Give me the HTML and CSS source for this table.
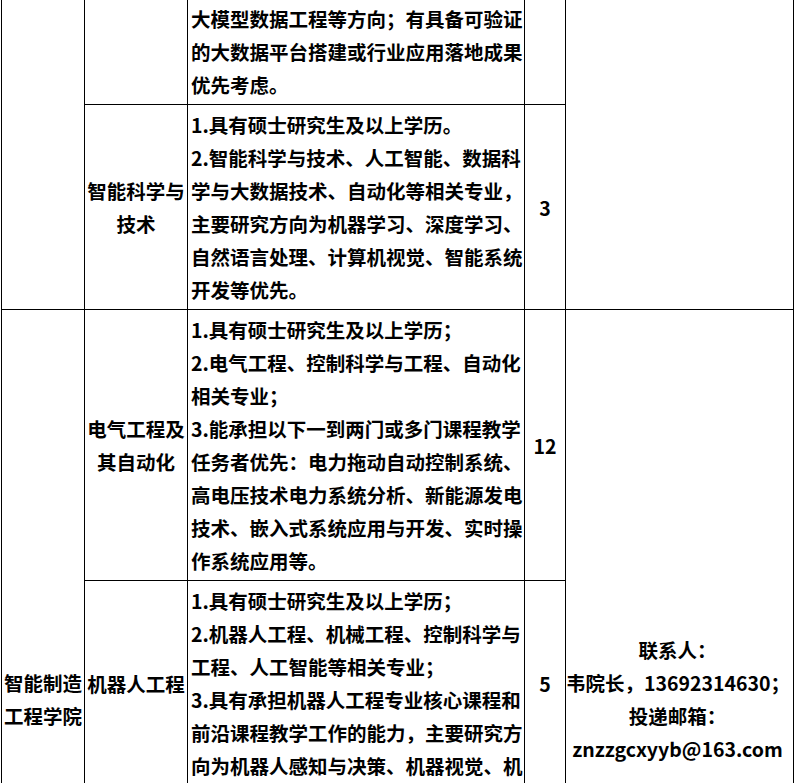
FILE: index.html
```html
<!DOCTYPE html>
<html lang="zh-CN">
<head>
<meta charset="utf-8">
<title>招聘岗位表</title>
<link rel="stylesheet" href="styles.css">
</head>
<body>
<table class="grid">
  <colgroup>
    <col class="c-college">
    <col class="c-major">
    <col class="c-req">
    <col class="c-num">
    <col class="c-contact">
  </colgroup>
  <tbody>
    <tr>
      <td rowspan="2" class="blank"></td>
      <td class="major"></td>
      <td class="req">大模型数据工程等方向；有具备可验证<br>的大数据平台搭建或行业应用落地成果<br>优先考虑。</td>
      <td class="num"></td>
      <td rowspan="2" class="blank"></td>
    </tr>
    <tr>
      <td class="major">智能科学与<br>技术</td>
      <td class="req">1.具有硕士研究生及以上学历。<br>2.智能科学与技术、人工智能、数据科<br>学与大数据技术、自动化等相关专业，<br>主要研究方向为机器学习、深度学习、<br>自然语言处理、计算机视觉、智能系统<br>开发等优先。</td>
      <td class="num">3</td>
    </tr>
    <tr>
      <td rowspan="2" class="college split-cell">智能制造<br>工程学院</td>
      <td class="major">电气工程及<br>其自动化</td>
      <td class="req">1.具有硕士研究生及以上学历；<br>2.电气工程、控制科学与工程、自动化<br>相关专业；<br>3.能承担以下一到两门或多门课程教学<br>任务者优先：电力拖动自动控制系统、<br>高电压技术电力系统分析、新能源发电<br>技术、嵌入式系统应用与开发、实时操<br>作系统应用等。</td>
      <td class="num">12</td>
      <td rowspan="2" class="contact split-cell">联系人：<br>韦院长，13692314630；<br>投递邮箱：<br>znzzgcxyyb@163.com</td>
    </tr>
    <tr>
      <td class="major">机器人工程</td>
      <td class="req">1.具有硕士研究生及以上学历；<br>2.机器人工程、机械工程、控制科学与<br>工程、人工智能等相关专业；<br>3.具有承担机器人工程专业核心课程和<br>前沿课程教学工作的能力，主要研究方<br>向为机器人感知与决策、机器视觉、机</td>
      <td class="num">5</td>
    </tr>
  </tbody>
</table>
</body>
</html>
```

FILE: styles.css
```css
html, body {
  margin: 0;
  padding: 0;
  background: #ffffff;
}

body {
  font-family: "Noto Sans CJK SC", "Noto Sans", sans-serif;
  font-weight: 700;
  font-size: 19.5px;
  line-height: 33px;
  color: #000000;
}

.grid {
  border-collapse: collapse;
  table-layout: fixed;
  width: 792px;
  margin: -2px 0 0 1px;
}

.c-college { width: 83px; }
.c-major { width: 103px; }
.c-req { width: 337px; }
.c-num { width: 41px; }
.c-contact { width: 228px; }

.grid td {
  border: 1px solid #000000;
  padding: 3px 2px;
  vertical-align: middle;
}

.req {
  text-align: left;
  white-space: nowrap;
}

.grid td.req {
  padding-left: 3px;
}

.major,
.num,
.college,
.contact {
  text-align: center;
}

.contact {
  white-space: nowrap;
}

.grid td.split-cell {
  padding-top: 306px;
  padding-left: 0;
  padding-right: 0;
}

.grid td.contact {
  padding-right: 4px;
}
```
